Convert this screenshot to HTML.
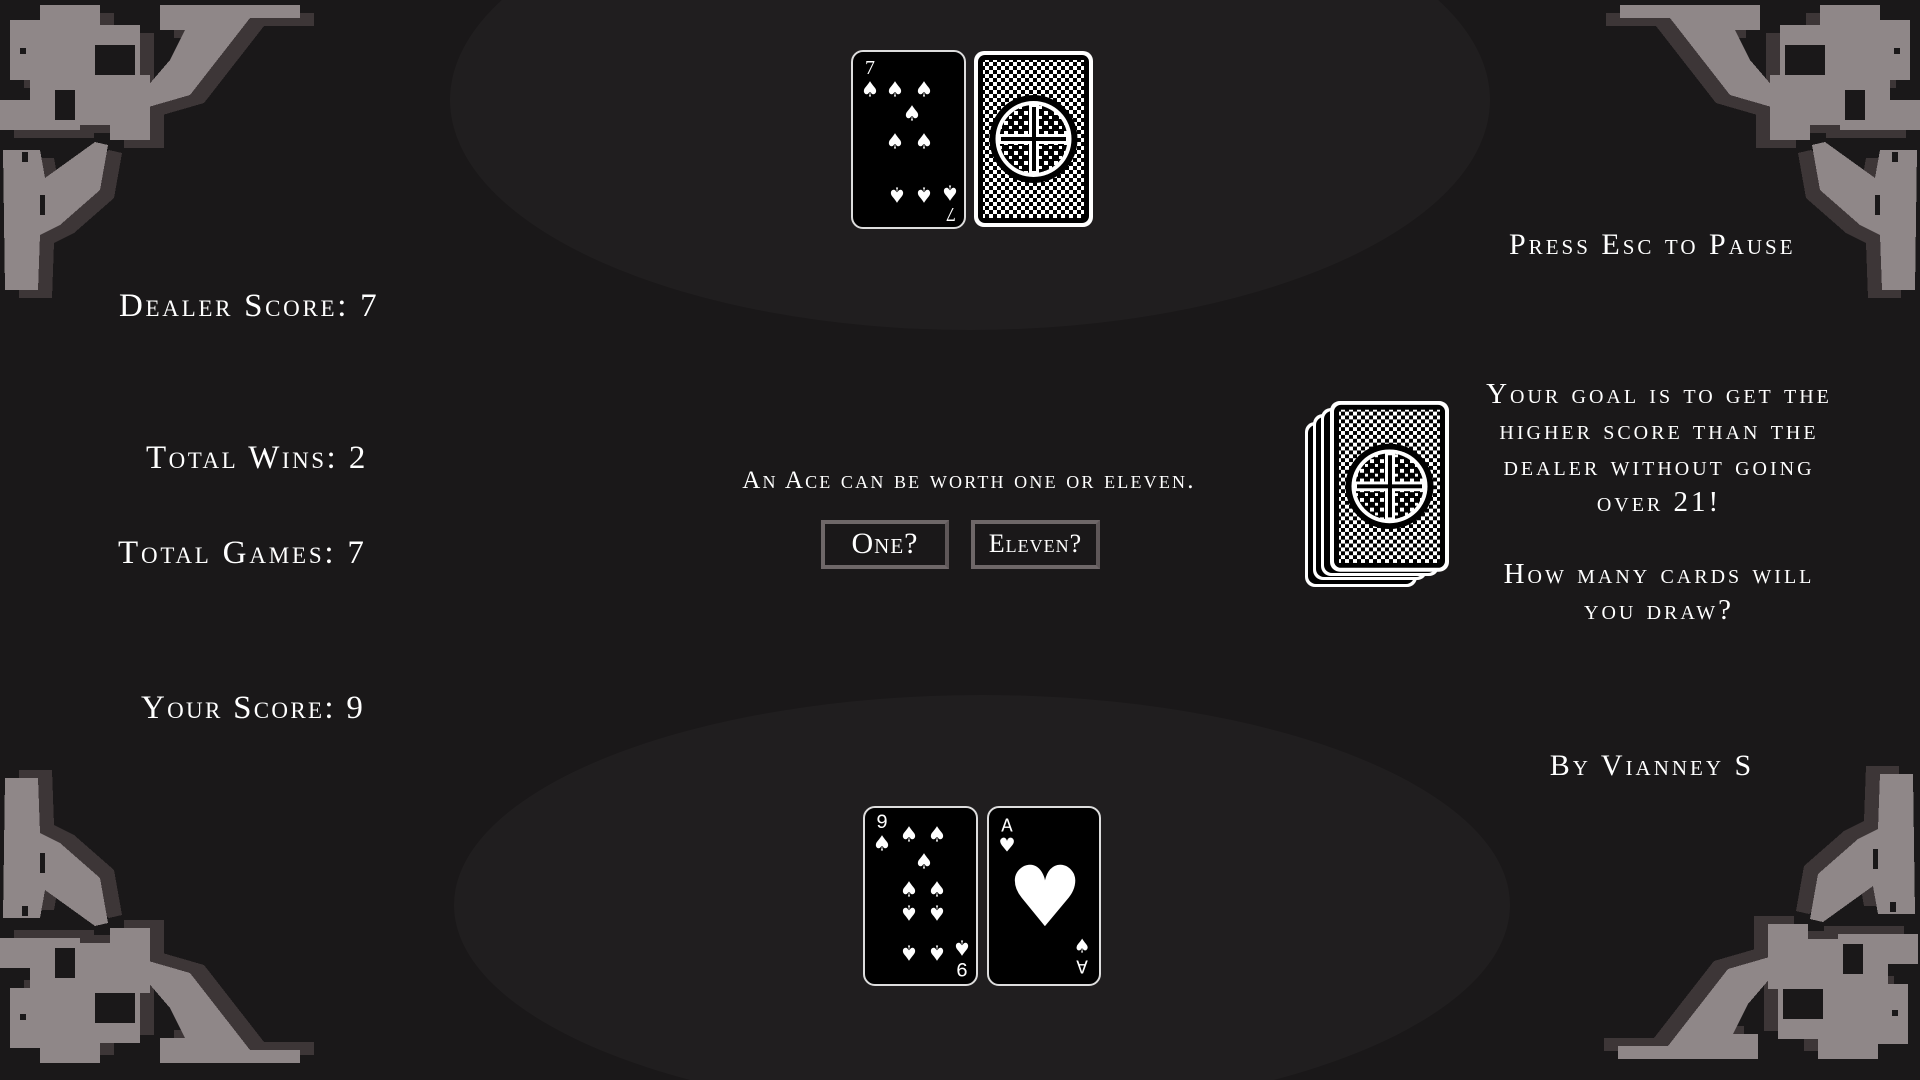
<!DOCTYPE html>
<html><head><meta charset="utf-8"><style>
html,body{margin:0;padding:0;background:#1a1819;width:1920px;height:1080px;overflow:hidden;position:relative;font-family:"Liberation Serif",serif;color:#fff}
.t{position:absolute;font-variant:small-caps;white-space:nowrap;letter-spacing:2.5px;line-height:1}
.card{position:absolute;background:#000;border:2px solid #ddd;border-radius:12px;box-sizing:border-box;overflow:hidden}
.p{position:absolute;font-family:"DejaVu Sans",sans-serif;font-size:21px;line-height:1;transform:translate(-50%,-50%);color:#fff}
.p.i{transform:translate(-50%,-50%) rotate(180deg)}
.btn{position:absolute;border:4px solid #6e6768;border-right-color:#5e5758;background:#1a1819;box-sizing:border-box;font-variant:small-caps;text-align:center;color:#fff;letter-spacing:1px}
svg{position:absolute}
</style></head><body>
<svg width="1920" height="1080" style="left:0;top:0">
<ellipse cx="970" cy="100" rx="520" ry="230" fill="#201e1f"/>
<ellipse cx="982" cy="905" rx="528" ry="210" fill="#201e1f"/>
<defs>
<g id="orn" shape-rendering="crispEdges">
 <g fill="#3d3637" transform="translate(14,8)">
  <polygon points="160,5 300,5 300,18 250,18 190,95 145,108 140,95 170,60 185,30 160,30"/>
  <rect x="10" y="20" width="70" height="60"/><rect x="40" y="5" width="60" height="30"/><rect x="80" y="25" width="60" height="50"/>
  <rect x="30" y="70" width="50" height="60"/><rect x="0" y="100" width="50" height="30"/><rect x="80" y="75" width="70" height="50"/><rect x="110" y="110" width="40" height="30"/>
  <polygon points="3,150 40,150 45,178 95,142 108,145 100,190 60,225 40,235 38,290 5,290"/>
 </g>
 <g fill="#8f8788">
  <polygon points="160,5 300,5 300,18 250,18 190,95 145,108 140,95 170,60 185,30 160,30"/>
  <rect x="10" y="20" width="70" height="60"/><rect x="40" y="5" width="60" height="30"/><rect x="80" y="25" width="60" height="50"/>
  <rect x="30" y="70" width="50" height="60"/><rect x="0" y="100" width="50" height="30"/><rect x="80" y="75" width="70" height="50"/><rect x="110" y="110" width="40" height="30"/>
  <polygon points="3,150 40,150 45,178 95,142 108,145 100,190 60,225 40,235 38,290 5,290"/>
 </g>
 <g fill="#1a1819">
  <rect x="95" y="45" width="40" height="30"/><rect x="55" y="90" width="20" height="30"/><rect x="22" y="152" width="6" height="10"/><rect x="20" y="48" width="6" height="6"/><rect x="40" y="195" width="5" height="20"/>
 </g>
</g>
<g id="back">
 <rect x="1" y="1" width="119" height="176" rx="10" fill="#fff"/>
 <rect x="5" y="5" width="111" height="168" rx="7" fill="#000"/>
 <rect x="10" y="10" width="101" height="158" fill="url(#chk)"/>
 <circle cx="60.5" cy="89" r="44" fill="#000"/>
 <circle cx="60.5" cy="89" r="38" fill="#fff"/>
 <circle cx="60.5" cy="89" r="34" fill="url(#chk2)"/>
 <rect x="24" y="84" width="73" height="10" fill="#fff"/><rect x="56" y="53" width="10" height="72" fill="#fff"/>
 <rect x="28" y="87" width="65" height="4" fill="#000"/><rect x="59" y="57" width="4" height="64" fill="#000"/>
</g>
<pattern id="chk" width="8" height="8" patternUnits="userSpaceOnUse"><rect width="8" height="8" fill="#fff"/><rect width="4" height="4" fill="#000"/><rect x="4" y="4" width="4" height="4" fill="#000"/></pattern>
<pattern id="chk2" width="10" height="10" patternUnits="userSpaceOnUse"><rect width="10" height="10" fill="#000"/><rect x="1" y="1" width="4" height="4" fill="#fff"/><rect x="6" y="6" width="3" height="3" fill="#fff"/></pattern>
</defs>
<use href="#orn" transform="translate(0,0)"/>
<use href="#orn" transform="translate(1920,0) scale(-1,1)"/>
<use href="#orn" transform="translate(0,1068) scale(1,-1)"/>
<use href="#orn" transform="translate(1918,1064) scale(-1,-1)"/>
<use href="#back" transform="translate(973,50)"/>
<g transform="translate(1305,400)">
 <rect x="0" y="22" width="112" height="165" rx="10" fill="#fff"/><rect x="3" y="25" width="106" height="159" rx="8" fill="#000"/>
 <rect x="8" y="14" width="114" height="166" rx="10" fill="#fff"/><rect x="11" y="17" width="108" height="160" rx="8" fill="#000"/>
 <rect x="16" y="8" width="118" height="168" rx="10" fill="#fff"/><rect x="19" y="11" width="112" height="162" rx="8" fill="#000"/>
 <g transform="translate(24,0) scale(1.0,0.97)"><use href="#back"/></g>
</g>
</svg>

<div class="t" style="left:119px;top:290px;font-size:33px;letter-spacing:2.7px">Dealer Score: 7</div>
<div class="t" style="left:146px;top:442px;font-size:33px;letter-spacing:2.5px">Total Wins: 2</div>
<div class="t" style="left:118px;top:537px;font-size:33px;letter-spacing:2.8px">Total Games: 7</div>
<div class="t" style="left:141px;top:692px;font-size:33px;letter-spacing:2.3px">Your Score: 9</div>
<div class="t" style="left:1509px;top:230px;font-size:30px;letter-spacing:3px">Press Esc to Pause</div>
<div class="t" style="left:1652px;top:751px;font-size:30px;transform:translateX(-50%);letter-spacing:3px">By Vianney S</div>
<div class="t" style="left:1659px;top:376px;font-size:29px;transform:translateX(-50%);text-align:center;line-height:36px;letter-spacing:3px">Your goal is to get the<br>higher score than the<br>dealer without going<br>over 21!<br><br>How many cards will<br>you draw?</div>
<div class="t" style="left:969px;top:468px;font-size:25px;transform:translateX(-50%);letter-spacing:2.2px">An Ace can be worth one or eleven.</div>
<div class="btn" style="left:821px;top:520px;width:128px;height:49px;font-size:30px;line-height:40px">One?</div>
<div class="btn" style="left:971px;top:520px;width:129px;height:49px;font-size:26px;line-height:40px">Eleven?</div>

<div class="card" style="left:851px;top:50px;width:115px;height:179px">
 <div class="p" style="left:17px;top:16px;font-family:'Liberation Serif';font-size:20px">7</div>
 <div class="p" style="left:17px;top:38px">♠</div><div class="p" style="left:42px;top:38px">♠</div><div class="p" style="left:71px;top:38px">♠</div>
 <div class="p" style="left:59px;top:62px">♠</div>
 <div class="p" style="left:42px;top:90px">♠</div><div class="p" style="left:71px;top:90px">♠</div>
 <div class="p i" style="left:44px;top:142px">♠</div><div class="p i" style="left:71px;top:142px">♠</div><div class="p i" style="left:97px;top:140px">♠</div>
 <div class="p i" style="left:98px;top:162px;font-family:'Liberation Serif';font-size:20px">7</div>
</div>

<div class="card" style="left:863px;top:806px;width:115px;height:180px">
 <div class="p" style="left:17px;top:16px;font-family:'Liberation Mono';font-size:20px">9</div>
 <div class="p" style="left:17px;top:36px">♠</div><div class="p" style="left:44px;top:27px">♠</div><div class="p" style="left:72px;top:27px">♠</div>
 <div class="p" style="left:59px;top:54px">♠</div>
 <div class="p" style="left:44px;top:82px">♠</div><div class="p" style="left:72px;top:82px">♠</div>
 <div class="p i" style="left:44px;top:104px">♠</div><div class="p i" style="left:72px;top:104px">♠</div>
 <div class="p i" style="left:44px;top:144px">♠</div><div class="p i" style="left:72px;top:144px">♠</div><div class="p i" style="left:97px;top:139px">♠</div>
 <div class="p i" style="left:97px;top:159px;font-family:'Liberation Mono';font-size:20px">9</div>
</div>

<div class="card" style="left:987px;top:806px;width:114px;height:180px">
 <div class="p" style="left:18px;top:19px;font-family:'Liberation Mono';font-size:19px">A</div>
 <div class="p" style="left:18px;top:38px;font-size:19px">♥</div>
 <div class="p" style="left:56px;top:89px;font-size:84px">♥</div>
 <div class="p" style="left:93px;top:139px;font-size:19px">♠</div>
 <div class="p i" style="left:93px;top:157px;font-family:'Liberation Mono';font-size:19px">A</div>
</div>
</body></html>
